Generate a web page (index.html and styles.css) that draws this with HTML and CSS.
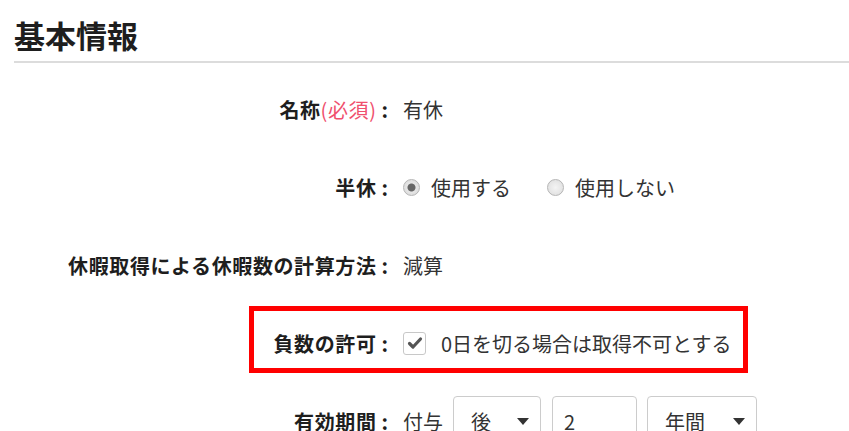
FILE: index.html
```html
<!DOCTYPE html>
<html lang="ja">
<head>
    <meta charset="UTF-8">
    <meta name="viewport" content="width=device-width, initial-scale=1.0">
    <title>基本情報</title>
    <link rel="stylesheet" href="styles.css">
</head>
<body>
    <div class="section">
        <h2 class="section-title">基本情報</h2>

        <div class="form-row">
            <div class="form-label">名称<span class="required">(必須)</span><span class="colon">:</span></div>
            <div class="form-value">有休</div>
        </div>

        <div class="form-row">
            <div class="form-label">半休<span class="colon">:</span></div>
            <div class="form-value">
                <label class="choice"><input type="radio" name="half" checked> 使用する</label>
                <label class="choice"><input type="radio" name="half"> 使用しない</label>
            </div>
        </div>

        <div class="form-row">
            <div class="form-label">休暇取得による休暇数の計算方法<span class="colon">:</span></div>
            <div class="form-value">減算</div>
        </div>

        <div class="form-row highlight">
            <div class="form-label">負数の許可<span class="colon">:</span></div>
            <div class="form-value">
                <label class="choice">
                    <span class="checkbox">
                        <svg width="16" height="14" viewBox="0 0 16 14"><path d="M2.5 7.5 L6 11 L13.5 3" fill="none" stroke="#555" stroke-width="3.2" stroke-linecap="round" stroke-linejoin="round"/></svg>
                    </span>
                    0日を切る場合は取得不可とする
                </label>
            </div>
        </div>

        <div class="form-row">
            <div class="form-label">有効期間<span class="colon">:</span></div>
            <div class="form-value">
                <span>付与</span>
                <div class="select-box small">
                    <select>
                        <option>後</option>
                        <option>前</option>
                    </select>
                </div>
                <input type="text" class="text-box" value="2">
                <div class="select-box wide">
                    <select>
                        <option>年間</option>
                        <option>ヶ月間</option>
                    </select>
                </div>
            </div>
        </div>
    </div>
</body>
</html>
```

FILE: styles.css
```css
body {
    margin: 0;
    font-family: "Noto Sans CJK JP", "Noto Sans", sans-serif;
    font-size: 20px;
    color: #333;
    background: #fff;
}
.section {
    padding-left: 14px;
}
.section-title {
    margin: 0;
    padding-top: 18px;
    padding-bottom: 9px;
    font-size: 31px;
    line-height: 34px;
    color: #1e1e1e;
    border-bottom: 2px solid #dcdcdc;
}
.form-row {
    position: relative;
    display: flex;
    align-items: center;
    height: 78px;
}
.section-title + .form-row {
    margin-top: 7px;
}
.form-label {
    width: 374px;
    flex-shrink: 0;
    text-align: right;
    font-weight: bold;
    letter-spacing: 0.6px;
    color: #1e1e1e;
}
.colon {
    padding-left: 5px;
    letter-spacing: 0;
}
.required {
    color: #f0506e;
    font-weight: normal;
}
.form-value {
    display: flex;
    align-items: center;
    margin-left: 15px;
}
.choice {
    display: flex;
    align-items: center;
    margin-right: 36px;
}
.choice input[type="radio"] {
    appearance: none;
    width: 17px;
    height: 17px;
    margin: 0 11px 0 0;
    border: 1px solid #b5b5b5;
    border-radius: 50%;
    background: radial-gradient(circle, #f4f4f4 0, #dcdcdc 100%);
}
.choice input[type="radio"]:checked {
    background: radial-gradient(circle, #666 0, #666 3.5px, #e6e6e6 4.5px, #d6d6d6 100%);
}
.checkbox {
    display: inline-flex;
    align-items: center;
    justify-content: center;
    width: 23px;
    height: 23px;
    margin-right: 15px;
    border: 1px solid #c8c8c8;
    border-radius: 3px;
    box-sizing: border-box;
}
.highlight::after {
    content: "";
    position: absolute;
    top: 2px;
    left: 235px;
    width: 499px;
    height: 67px;
    border: 5px solid #f00;
    box-sizing: border-box;
}
.select-box {
    position: relative;
    margin-left: 10px;
}
.select-box select {
    appearance: none;
    height: 50px;
    padding: 0 0 0 17px;
    border: 1px solid #ccc;
    border-radius: 4px;
    background: #fff;
    font-family: inherit;
    font-size: 20px;
    color: #333;
}
.select-box::after {
    content: "";
    position: absolute;
    top: 22px;
    right: 12px;
    border-left: 6px solid transparent;
    border-right: 6px solid transparent;
    border-top: 7px solid #333;
}
.select-box.small select {
    width: 88px;
}
.select-box.wide select {
    width: 110px;
}
.text-box {
    width: 85px;
    height: 50px;
    margin-left: 11px;
    padding: 0 0 0 11px;
    border: 1px solid #ccc;
    border-radius: 4px;
    box-sizing: border-box;
    font-family: inherit;
    font-size: 20px;
    color: #333;
}
```
